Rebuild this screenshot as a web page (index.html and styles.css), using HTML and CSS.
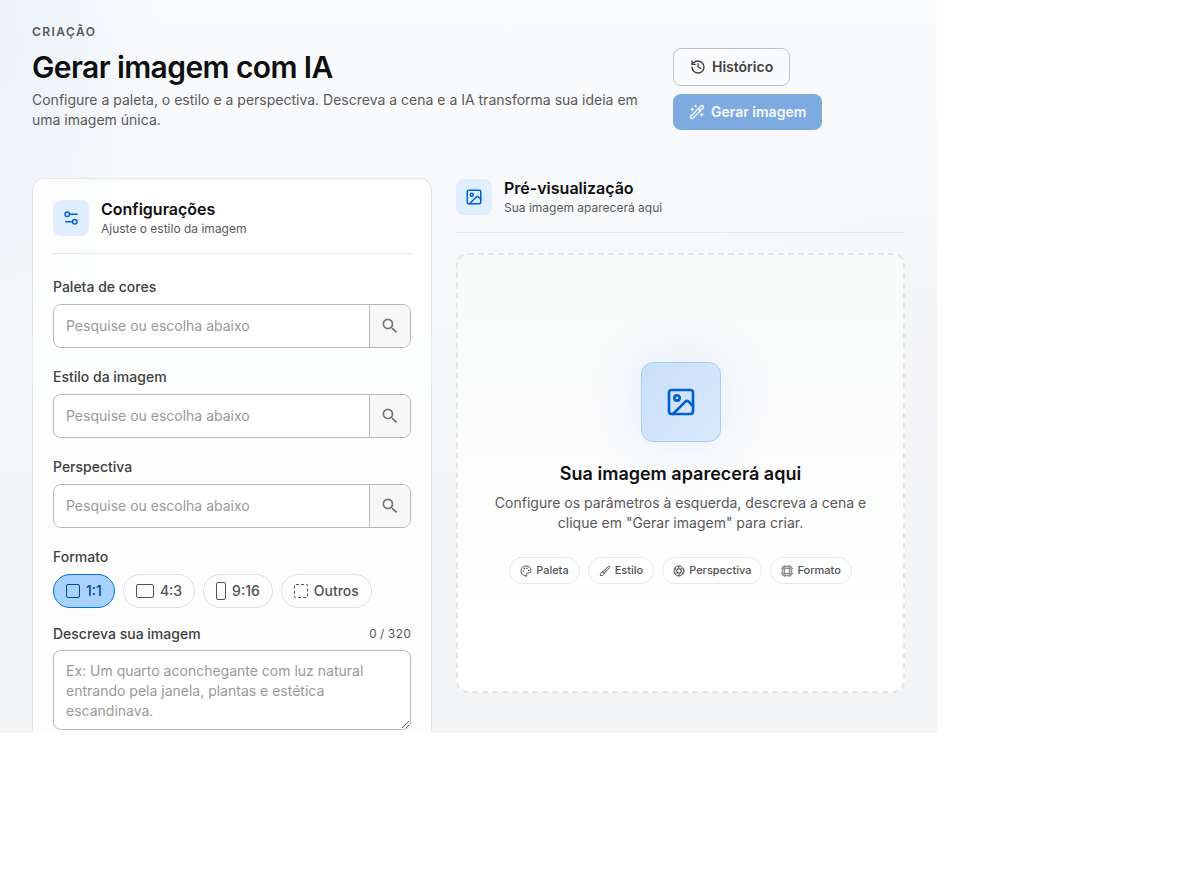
FILE: index.html
```html
<!DOCTYPE html>
<html lang="pt-BR">
<head>
  <meta charset="UTF-8">
  <meta name="viewport" content="width=device-width, initial-scale=1.0">
  <title>Gerar imagem com IA</title>
  <link rel="stylesheet" href="styles.css">
</head>
<body>
  <!-- Shared icons -->
  <svg class="sprite" aria-hidden="true">
    <symbol id="icon-image" viewBox="0 0 24 24">
      <rect x="3" y="3" width="18" height="18" rx="2"/>
      <circle cx="9" cy="9" r="2"/>
      <path d="m21 15-3.086-3.086a2 2 0 0 0-2.828 0L6 21"/>
    </symbol>
    <symbol id="icon-search" viewBox="0 0 24 24">
      <path d="M15.5 14h-.79l-.28-.27A6.47 6.47 0 0 0 16 9.5 6.5 6.5 0 1 0 9.5 16c1.61 0 3.09-.59 4.23-1.57l.27.28v.79l5 4.99L20.49 19l-4.99-5zm-6 0C7.01 14 5 11.99 5 9.5S7.01 5 9.5 5 14 7.01 14 9.5 11.99 14 9.5 14z"/>
    </symbol>
  </svg>

  <div class="app">
    <header class="page-header">
      <div>
        <p class="eyebrow">Criação</p>
        <h1>Gerar imagem com IA</h1>
        <p class="lead">Configure a paleta, o estilo e a perspectiva. Descreva a cena e a IA transforma sua ideia em uma imagem única.</p>
      </div>
      <div class="actions">
        <button type="button" class="btn btn-outline">
          <svg class="icon" viewBox="0 0 24 24"><path d="M3 12a9 9 0 1 0 9-9 9.75 9.75 0 0 0-6.74 2.74L3 8"/><path d="M3 3v5h5"/><path d="M12 7v5l4 2"/></svg>
          Histórico
        </button>
        <button type="submit" form="config" class="btn btn-primary" disabled>
          <svg class="icon" viewBox="0 0 24 24"><path d="m21.64 3.64-1.28-1.28a1.21 1.21 0 0 0-1.72 0L2.36 18.64a1.21 1.21 0 0 0 0 1.72l1.28 1.28a1.2 1.2 0 0 0 1.72 0L21.64 5.36a1.2 1.2 0 0 0 0-1.72"/><path d="m14 7 3 3"/><path d="M5 6v4M19 14v4M10 2v2M7 8H3M21 16h-4M11 3H9"/></svg>
          Gerar imagem
        </button>
      </div>
    </header>

    <main class="columns">
      <form id="config" class="card">
        <div class="section-header">
          <span class="badge">
            <svg class="icon" viewBox="0 0 24 24"><path d="M20 7h-9M14 17H5"/><circle cx="17" cy="17" r="3"/><circle cx="7" cy="7" r="3"/></svg>
          </span>
          <div>
            <h2>Configurações</h2>
            <p>Ajuste o estilo da imagem</p>
          </div>
        </div>

        <div class="field">
          <label for="palette">Paleta de cores</label>
          <div class="search">
            <input type="text" id="palette" placeholder="Pesquise ou escolha abaixo">
            <button type="button" aria-label="Pesquisar paleta"><svg><use href="#icon-search"/></svg></button>
          </div>
        </div>
        <div class="field">
          <label for="style">Estilo da imagem</label>
          <div class="search">
            <input type="text" id="style" placeholder="Pesquise ou escolha abaixo">
            <button type="button" aria-label="Pesquisar estilo"><svg><use href="#icon-search"/></svg></button>
          </div>
        </div>
        <div class="field">
          <label for="perspective">Perspectiva</label>
          <div class="search">
            <input type="text" id="perspective" placeholder="Pesquise ou escolha abaixo">
            <button type="button" aria-label="Pesquisar perspectiva"><svg><use href="#icon-search"/></svg></button>
          </div>
        </div>

        <div class="field" role="group" aria-labelledby="format-label">
          <span class="label" id="format-label">Formato</span>
          <div class="formats">
            <button type="button" class="format selected" aria-pressed="true"><span class="shape square"></span>1:1</button>
            <button type="button" class="format" aria-pressed="false"><span class="shape landscape"></span>4:3</button>
            <button type="button" class="format" aria-pressed="false"><span class="shape portrait"></span>9:16</button>
            <button type="button" class="format" aria-pressed="false"><span class="shape square dashed"></span>Outros</button>
          </div>
        </div>

        <div class="field-row">
          <label for="prompt">Descreva sua imagem</label>
          <span class="counter">0 / 320</span>
        </div>
        <textarea id="prompt" maxlength="320" placeholder="Ex: Um quarto aconchegante com luz natural entrando pela janela, plantas e estética escandinava."></textarea>
      </form>

      <section>
        <div class="section-header">
          <span class="badge"><svg class="icon"><use href="#icon-image"/></svg></span>
          <div>
            <h2>Pré-visualização</h2>
            <p>Sua imagem aparecerá aqui</p>
          </div>
        </div>

        <div class="empty">
          <div class="empty-icon"><svg class="icon"><use href="#icon-image"/></svg></div>
          <h3>Sua imagem aparecerá aqui</h3>
          <p>Configure os parâmetros à esquerda, descreva a cena e clique em "Gerar imagem" para criar.</p>
          <ul class="chips">
            <li>
              <svg class="icon" viewBox="0 0 24 24"><path d="M12 22a1 1 0 0 1 0-20 10 9 0 0 1 10 9 5 5 0 0 1-5 5h-2.25a1.75 1.75 0 0 0-1.4 2.8l.3.4a1.75 1.75 0 0 1-1.4 2.8z"/><circle cx="13.5" cy="6.5" r=".5"/><circle cx="17.5" cy="10.5" r=".5"/><circle cx="6.5" cy="12.5" r=".5"/><circle cx="8.5" cy="7.5" r=".5"/></svg>
              Paleta
            </li>
            <li>
              <svg class="icon" viewBox="0 0 24 24"><path d="m11 10 8.4-7.4a1.5 1.5 0 0 1 2 2L14 13"/><path d="M7 13.5c-2 0-3 1.5-3 3 0 2-1 3.5-2 4 3 1.5 8 1 8-4a3 3 0 0 0-3-3z"/><path d="m8 13 3-3 3 3-4 3.5"/></svg>
              Estilo
            </li>
            <li>
              <svg class="icon" viewBox="0 0 24 24"><circle cx="12" cy="12" r="10"/><path d="m14.31 8 5.74 9.94M9.69 8h11.48M7.38 12l5.74-9.94M9.69 16 3.95 6.06M14.31 16H2.83M16.62 12l-5.74 9.94"/></svg>
              Perspectiva
            </li>
            <li>
              <svg class="icon frame" viewBox="0 0 24 24"><rect x="3" y="3" width="18" height="18" rx="4"/><path d="M7 1v22M17 1v22M1 7h22M1 17h22"/></svg>
              Formato
            </li>
          </ul>
        </div>
      </section>
    </main>
  </div>
</body>
</html>
```

FILE: styles.css
```css
* {
  box-sizing: border-box;
}
body {
  margin: 0;
  background: #fff;
  color: #404040;
  font-family: Inter, "Liberation Sans", sans-serif;
  font-size: 14px;
  line-height: 20px;
}
h1, h2, h3, p, ul {
  margin: 0;
  padding: 0;
}
button, input, textarea {
  font: inherit;
}
.sprite {
  display: none;
}
.icon {
  width: 16px;
  height: 16px;
  flex: none;
  fill: none;
  stroke: currentColor;
  stroke-width: 2;
  stroke-linecap: round;
  stroke-linejoin: round;
}

.app {
  width: calc(100% - 243px);
  height: calc(100vh - 160px);
  overflow: hidden;
  padding: 24px 32px;
  background:
    radial-gradient(ellipse 160px 340px at 0 20px, rgba(0, 112, 243, 0.06), transparent),
    radial-gradient(circle at 100% 55%, rgba(100, 80, 140, 0.02), transparent 300px),
    linear-gradient(#fafbfc, #f2f3f5);
}

/* Header */
.page-header {
  display: grid;
  grid-template-columns: 1fr 232px;
  gap: 32px;
  align-items: end;
  margin-bottom: 48px;
}
.eyebrow {
  color: #595959;
  font-size: 12px;
  line-height: 16px;
  font-weight: 600;
  letter-spacing: 0.12em;
  text-transform: uppercase;
}
h1 {
  margin: 8px 0 4px;
  color: #0f0f10;
  font-size: 30px;
  line-height: 38px;
  font-weight: 600;
  letter-spacing: -0.02em;
}
.lead {
  color: #595959;
}
.actions {
  display: flex;
  flex-wrap: wrap;
  gap: 8px;
}
.btn {
  display: inline-flex;
  align-items: center;
  gap: 6px;
  padding: 8px 16px;
  border: 0;
  border-radius: 8px;
  font-weight: 600;
}
.btn-outline {
  border: 1px solid #c4c4c6;
  background: transparent;
  color: #404040;
}
.btn-primary {
  background: #7dabe1;
  color: #f7fafd;
}

/* Columns */
.columns {
  display: grid;
  grid-template-columns: 400px 1fr;
  gap: 24px;
  align-items: start;
}
.card {
  padding: 20px;
  border: 1px solid #e4e5e7;
  border-radius: 12px;
  background: rgba(255, 255, 255, 0.8);
}
.section-header {
  display: flex;
  align-items: center;
  gap: 12px;
  padding-bottom: 16px;
  border-bottom: 1px solid #e5e6e8;
}
.section-header h2 {
  color: #0f0f10;
  font-size: 16px;
  line-height: 20px;
  font-weight: 600;
}
.section-header p {
  margin-top: 2px;
  color: #595959;
  font-size: 12px;
  line-height: 16px;
}
.badge {
  display: grid;
  place-items: center;
  width: 36px;
  height: 36px;
  border-radius: 8px;
  background: #e0efff;
  color: #0060d1;
}
.badge .icon {
  width: 18px;
  height: 18px;
}

/* Form */
.field {
  margin-bottom: 20px;
}
.section-header + .field {
  margin-top: 24px;
}
.field label, .label {
  display: block;
  margin-bottom: 8px;
  line-height: 18px;
  font-weight: 500;
}
.search {
  display: flex;
  height: 44px;
  overflow: hidden;
  border: 1px solid #b8b8b8;
  border-radius: 8px;
  background: #fff;
}
.search input {
  flex: 1;
  min-width: 0;
  padding: 0 12px;
  border: 0;
  background: none;
}
.search button {
  display: grid;
  place-items: center;
  width: 41px;
  padding: 0;
  border: 0;
  border-left: 1px solid #b8b8b8;
  background: #f7f7f7;
}
.search svg {
  width: 20px;
  height: 20px;
  fill: #757575;
}
::placeholder {
  color: #999;
  opacity: 1;
}
.formats {
  display: flex;
  gap: 8px;
  margin-bottom: -4px;
}
.format {
  display: flex;
  align-items: center;
  gap: 6px;
  height: 34px;
  padding: 0 12px;
  border: 1px solid #e0e0e0;
  border-radius: 17px;
  background: #fdfdfe;
  color: #525252;
  font-weight: 500;
}
.format.selected {
  border-color: #0070f3;
  background: #a8d1fc;
  color: #004799;
}
.shape {
  border: 1px solid currentColor;
  border-radius: 2px;
}
.square {
  width: 14px;
  height: 14px;
}
.landscape {
  width: 18px;
  height: 14px;
}
.portrait {
  width: 10px;
  height: 18px;
}
.dashed {
  border-style: dashed;
}
.field-row {
  display: flex;
  justify-content: space-between;
  margin-bottom: 6px;
}
.field-row label {
  font-weight: 500;
}
.counter {
  color: #595959;
  font-size: 12px;
  font-variant-numeric: tabular-nums;
}
textarea {
  display: block;
  width: 100%;
  height: 80px;
  padding: 10px 12px 8px;
  border: 1px solid #b8b8b8;
  border-radius: 8px;
  background: #fff;
  resize: vertical;
}

/* Preview */
.empty {
  display: flex;
  flex-direction: column;
  align-items: center;
  justify-content: center;
  min-height: 440px;
  margin-top: 20px;
  padding: 32px;
  border: 2px dashed #e4e5e7;
  border-radius: 12px;
  background: linear-gradient(#f9fafa, #fff);
  text-align: center;
}
.empty-icon {
  display: grid;
  place-items: center;
  width: 80px;
  height: 80px;
  margin-bottom: 20px;
  border: 1px solid #a3cdfa;
  border-radius: 12px;
  background: linear-gradient(135deg, #cbdff9, #dae9fb);
  box-shadow: 0 0 60px rgba(0, 102, 230, 0.12);
  color: #0060d1;
}
.empty-icon .icon {
  width: 32px;
  height: 32px;
}
.empty h3 {
  margin-bottom: 8px;
  color: #0f0f10;
  font-size: 18px;
  line-height: 23px;
  font-weight: 600;
}
.empty p {
  max-width: 380px;
  color: #595959;
}
.chips {
  display: flex;
  flex-wrap: wrap;
  justify-content: center;
  gap: 8px;
  margin-top: 24px;
  list-style: none;
}
.chips li {
  display: flex;
  align-items: center;
  gap: 4px;
  padding: 5px 10px;
  border: 1px solid #e5e6e8;
  border-radius: 14px;
  background: #fff;
  color: #525252;
  font-size: 11px;
  line-height: 15px;
  font-weight: 500;
}
.chips .icon {
  width: 12px;
  height: 12px;
}
.chips .frame {
  stroke: #949494;
  stroke-width: 3;
}
```
